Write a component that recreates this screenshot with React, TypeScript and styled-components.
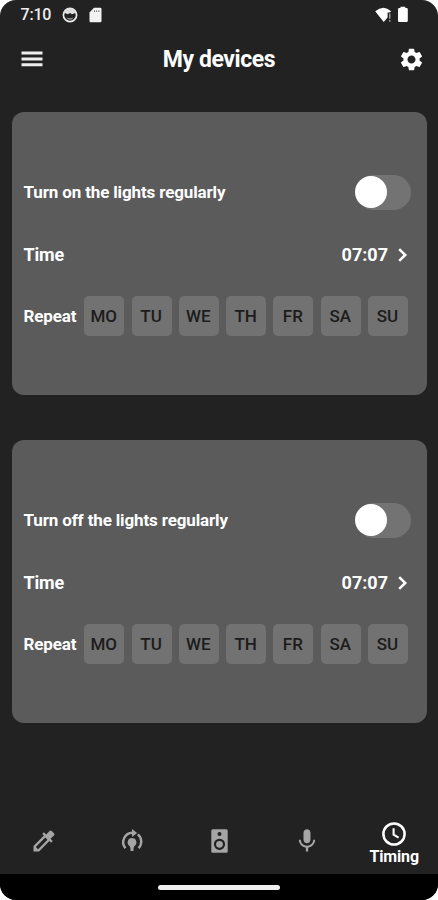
import React, { useState } from "react";
import styled, { createGlobalStyle } from "styled-components";
import { MdColorize, MdMic, MdSettings } from "react-icons/md";

const GlobalStyle = createGlobalStyle`
  * { box-sizing: border-box; }
  body { margin: 0; background: #fff; font-family: Roboto, sans-serif; }
  button { font: inherit; color: inherit; background: none; border: 0; padding: 0; }
  svg { display: block; flex: none; }
`;

const Screen = styled.div`
  width: 438px;
  height: 900px;
  display: flex;
  flex-direction: column;
  overflow: hidden;
  border-radius: 16px;
  background: #222;
  color: #fff;
`;

const StatusBar = styled.div`
  height: 29px;
  display: flex;
  align-items: center;
  padding: 0 29px 0 20.5px;
  color: #eee;
`;

const Clock = styled.span`
  width: 41.5px;
  font-size: 16px;
  font-weight: 500;
  letter-spacing: -0.2px;
`;

const StatusIcons = styled.div<{ $gap: number; $end?: boolean }>`
  display: flex;
  align-items: center;
  gap: ${(p) => p.$gap}px;
  margin-left: ${(p) => (p.$end ? "auto" : "0")};
`;

const Header = styled.header`
  height: 60px;
  display: flex;
  align-items: center;
  justify-content: space-between;
  padding: 0 13px 0 21px;
`;

const Title = styled.h1`
  margin: 2px 3px 0 0;
  font-size: 23px;
  line-height: 28px;
  font-weight: 700;
  letter-spacing: -0.42px;
`;

const Content = styled.main`
  flex: 1;
  display: flex;
  flex-direction: column;
  gap: 45px;
  padding: 22.6px 11px 0 11.5px;
`;

const Card = styled.section`
  height: 283px;
  display: flex;
  flex-direction: column;
  padding: 48px 16px 0 12px;
  border-radius: 12px;
  background: #5b5b5b;
`;

const Row = styled.div<{ $height: number }>`
  height: ${(p) => p.$height}px;
  display: flex;
  align-items: center;
  justify-content: space-between;
`;

const Label = styled.span<{ $size?: number; $spacing?: number }>`
  font-size: ${(p) => p.$size ?? 17}px;
  font-weight: 700;
  letter-spacing: ${(p) => p.$spacing ?? 0}px;
  white-space: nowrap;
`;

const Track = styled.button<{ $on: boolean }>`
  width: 55px;
  height: 35px;
  margin-top: 1px;
  display: flex;
  align-items: center;
  justify-content: ${(p) => (p.$on ? "flex-end" : "flex-start")};
  border-radius: 18px;
  background: ${(p) => (p.$on ? "#999" : "#737373")};
`;

const Knob = styled.span`
  width: 32px;
  height: 32px;
  margin: 0 0 1px -1px;
  border-radius: 50%;
  background: #fff;
`;

const TimeButton = styled.button`
  display: flex;
  align-items: center;
  gap: 10px;
  margin-right: 3px;
`;

const Days = styled.div`
  display: flex;
  gap: 7.3px;
  margin-right: 3px;
`;

const Day = styled.button`
  width: 40px;
  height: 40px;
  padding-right: 1px;
  border-radius: 5px;
  background: #727272;
  color: #1c1c1c;
  font-size: 17px;
  font-weight: 500;
  text-align: center;
`;

const TabBar = styled.nav`
  height: 66px;
  display: grid;
  grid-template-columns: repeat(5, 1fr);
`;

const Tab = styled.button<{ $active?: boolean }>`
  display: flex;
  flex-direction: column;
  align-items: center;
  justify-content: center;
  padding: ${(p) => (p.$active ? "3px 0 0" : "0 0 0 1px")};
  color: ${(p) => (p.$active ? "#fff" : "#a5a5a5")};
`;

const TabLabel = styled.span`
  font-size: 16px;
  line-height: 18px;
  font-weight: 700;
  letter-spacing: -0.15px;
`;

const GestureBar = styled.footer`
  height: 26px;
  display: flex;
  align-items: center;
  justify-content: center;
  background: #000;
`;

const Handle = styled.div`
  width: 122px;
  height: 5px;
  border-radius: 3px;
  background: #eee;
`;

const DAYS = ["MO", "TU", "WE", "TH", "FR", "SA", "SU"];

function FaceIcon() {
  return (
    <svg width="16" height="16" viewBox="0 0 16 16" fill="none">
      <circle cx="8" cy="8" r="6.6" stroke="#eee" strokeWidth="1.7" />
      <path d="M1.5 6.5C2.5 2 5 1.3 8 1.3S13.5 2 14.5 6.5L12.6 6.2 10 7.2 8 6 5.8 7.2 3.4 6.2Z" fill="#ddd" />
      <path d="M4.5 10.4Q8 12 11.5 10.4Q10.5 12.8 8 12.8T4.5 10.4Z" fill="#999" />
    </svg>
  );
}

function CardIcon() {
  return (
    <svg width="13" height="16" viewBox="0 0 13 16">
      <path d="M5 .8h6.3q1.2 0 1.2 1.2v12q0 1.3-1.2 1.3H1.7Q.5 15.3.5 14V5.4Z" fill="#f2f2f2" />
      <path d="M5 3.4h1v1.3H5zM7.2 3.4h1v1.3h-1zM9.4 3.4h1v1.3h-1z" fill="#444" />
    </svg>
  );
}

function WifiIcon() {
  return (
    <svg width="17" height="16" viewBox="0 0 17 16">
      <path d="M.2 4.2Q8.5-2.8 16.2 4.2L14.6 5.6H12.6V10.5L8.7 15Z" fill="#fff" />
      <path d="M14 6.5h1.5v5.3H14zM14 13h1.5v1.8H14z" fill="#999" />
    </svg>
  );
}

function BatteryIcon() {
  return (
    <svg width="12" height="17" viewBox="0 0 12 17">
      <path d="M3.5.8h4.8V2h1.2q1.3 0 1.3 1.3v11.4q0 1.3-1.3 1.3H2.3Q1 16 1 14.7V3.3Q1 2 2.3 2h1.2Z" fill="#fff" />
    </svg>
  );
}

function MenuIcon() {
  return (
    <svg width="22" height="16" viewBox="0 0 22 16" fill="#eee">
      <path d="M.5.6h21v3H.5zM.5 6.4h21v3H.5zM.5 12.2h21v3H.5z" />
    </svg>
  );
}

function ChevronIcon() {
  return (
    <svg width="10" height="14" viewBox="0 0 10 14" fill="none" stroke="#fff" strokeWidth="2.6">
      <path d="M1.2 1.1 7.2 7 1.2 12.9" />
    </svg>
  );
}

function TrainingIcon() {
  return (
    <svg width="24" height="24" viewBox="0 0 24 24" fill="none" stroke="currentColor" strokeWidth="2.4">
      <path d="M5.4 19.2A9.4 9.4 0 0 1 12.5 3.8" />
      <path d="M17.8 5.4A9.4 9.4 0 0 1 18.6 19.2" />
      <path d="M12 0 17.2 4 12 8Z" fill="currentColor" stroke="none" />
      <path d="M12 9a4.4 4.4 0 0 1 2.2 8.2L13.5 19.4v2.6h-3v-2.6l-.7-2.2a4.4 4.4 0 0 1 2.2-8.2Z" fill="currentColor" stroke="none" />
    </svg>
  );
}

function SpeakerIcon() {
  return (
    <svg width="17" height="24" viewBox="0 0 17 24">
      <rect x=".3" y=".3" width="16.4" height="23.4" rx="1.5" fill="currentColor" />
      <circle cx="8.5" cy="5" r="2" fill="#222" />
      <circle cx="8.5" cy="15.3" r="4.5" fill="none" stroke="#222" strokeWidth="2.2" />
    </svg>
  );
}

function ClockIcon() {
  return (
    <svg width="28" height="28" viewBox="0 0 28 28" fill="none" stroke="currentColor">
      <circle cx="14" cy="14" r="10.6" strokeWidth="2.5" />
      <path d="M13.6 8.2V14.6L18.6 17.6" strokeWidth="2.1" />
    </svg>
  );
}

function ScheduleCard({ title }: { title: string }) {
  const [on, setOn] = useState(false);
  return (
    <Card>
      <Row $height={64}>
        <Label $spacing={-0.14}>{title}</Label>
        <Track $on={on} onClick={() => setOn(!on)} aria-label={title}>
          <Knob />
        </Track>
      </Row>
      <Row $height={62}>
        <Label $size={18} $spacing={-0.2}>Time</Label>
        <TimeButton>
          <Label $size={18}>07:07</Label>
          <ChevronIcon />
        </TimeButton>
      </Row>
      <Row $height={60.5}>
        <Label $spacing={-0.15}>Repeat</Label>
        <Days>
          {DAYS.map((day) => (
            <Day key={day}>{day}</Day>
          ))}
        </Days>
      </Row>
    </Card>
  );
}

export default function App() {
  return (
    <>
      <GlobalStyle />
      <Screen>
        <StatusBar>
          <Clock>7:10</Clock>
          <StatusIcons $gap={10.5}>
            <FaceIcon />
            <CardIcon />
          </StatusIcons>
          <StatusIcons $gap={5.5} $end>
            <WifiIcon />
            <BatteryIcon />
          </StatusIcons>
        </StatusBar>
        <Header>
          <MenuIcon />
          <Title>My devices</Title>
          <MdSettings size={27} />
        </Header>
        <Content>
          <ScheduleCard title="Turn on the lights regularly" />
          <ScheduleCard title="Turn off the lights regularly" />
        </Content>
        <TabBar>
          <Tab aria-label="Color"><MdColorize size={28} /></Tab>
          <Tab aria-label="Scenes"><TrainingIcon /></Tab>
          <Tab aria-label="Music"><SpeakerIcon /></Tab>
          <Tab aria-label="Microphone"><MdMic size={28} /></Tab>
          <Tab $active>
            <ClockIcon />
            <TabLabel>Timing</TabLabel>
          </Tab>
        </TabBar>
        <GestureBar>
          <Handle />
        </GestureBar>
      </Screen>
    </>
  );
}
